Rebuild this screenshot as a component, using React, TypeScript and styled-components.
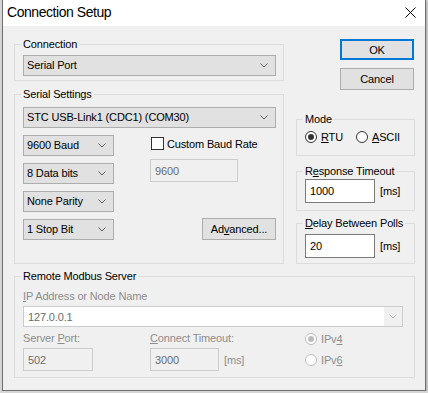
import React from "react";
import styled, { createGlobalStyle } from "styled-components";

const GlobalStyle = createGlobalStyle`
  html, body {
    margin: 0;
    padding: 0;
  }
  body {
    background: #d6d6d6;
    font-family: "Liberation Sans", Arial, sans-serif;
    font-size: 11px;
    letter-spacing: -0.15px;
    color: #000;
  }
  * {
    box-sizing: border-box;
  }
`;

const Window = styled.div`
  width: 424px;
  height: 391px;
  margin-left: 2px;
  border: 1px solid #6f6f6f;
  border-top: none;
  background: #f0f0f0;
  display: flex;
  flex-direction: column;
  box-shadow: 1px 1px 2px rgba(0, 0, 0, 0.2);
`;

const TitleBar = styled.div`
  height: 26px;
  flex: none;
  background: #fff;
  display: flex;
  align-items: center;
  justify-content: space-between;
  padding: 0 9px 2px 4px;
`;

const Title = styled.span`
  font-size: 14px;
  letter-spacing: -0.45px;
`;

const Body = styled.div`
  flex: 1;
  padding: 12px 0 0 11px;
`;

const TopRow = styled.div`
  display: flex;
  gap: 12px;
`;

const Column = styled.div<{ $w: number }>`
  width: ${(p) => p.$w}px;
  display: flex;
  flex-direction: column;
`;

const Group = styled.fieldset<{ $mt?: number; $pt?: number; $pb?: number; $w?: number }>`
  margin: ${(p) => p.$mt ?? 0}px 0 0 0;
  min-width: 0;
  width: ${(p) => (p.$w ? `${p.$w}px` : "auto")};
  border: 1px solid #dcdcdc;
  padding: ${(p) => p.$pt ?? 4}px 7px ${(p) => p.$pb ?? 4}px 8px;
`;

const Legend = styled.legend`
  padding: 0 2px;
  margin-left: -2px;
  line-height: 13px;
  white-space: nowrap;
`;

const Key = styled.span`
  text-decoration: underline;
  text-underline-offset: 1px;
`;

const Combo = styled.div<{ $w?: number; $mt?: number }>`
  display: flex;
  align-items: center;
  justify-content: space-between;
  width: ${(p) => (p.$w ? `${p.$w}px` : "100%")};
  height: 21px;
  margin-top: ${(p) => p.$mt ?? 0}px;
  padding: 0 7px 0 3px;
  background: #e1e1e1;
  border: 1px solid #adadad;
  line-height: 13px;
  white-space: nowrap;
`;

const EditCombo = styled.div`
  grid-column: 1 / -1;
  display: flex;
  width: 380px;
  height: 21px;
  margin-top: 3px;
  border: 1px solid #cccccc;
  background: #fff;
`;

const EditArea = styled.div`
  flex: 1;
  display: flex;
  align-items: center;
  padding-left: 4px;
  color: #6d6d6d;
  background: #fff;
`;

const DropArea = styled.div`
  width: 18px;
  display: flex;
  align-items: center;
  justify-content: center;
  background: #f0f0f0;
`;

const TextBox = styled.div<{ $w: number; $h?: number; $disabled?: boolean; $mt?: number }>`
  width: ${(p) => p.$w}px;
  height: ${(p) => p.$h ?? 23}px;
  margin-top: ${(p) => p.$mt ?? 0}px;
  display: flex;
  align-items: center;
  padding-left: 4px;
  border: 1px solid ${(p) => (p.$disabled ? "#cccccc" : "#7a7a7a")};
  background: ${(p) => (p.$disabled ? "#f0f0f0" : "#fff")};
  color: ${(p) => (p.$disabled ? "#6d6d6d" : "#000")};
`;

const Button = styled.div<{ $default?: boolean; $h?: number; $mt?: number }>`
  width: 74px;
  height: ${(p) => p.$h ?? 21}px;
  margin-top: ${(p) => p.$mt ?? 0}px;
  display: flex;
  align-items: center;
  justify-content: center;
  background: #e1e1e1;
  border: ${(p) => (p.$default ? "2px solid #0078d7" : "1px solid #adadad")};
`;

const ButtonStack = styled.div`
  display: flex;
  flex-direction: column;
  align-items: flex-end;
  padding-right: 1px;
`;

const SerialGrid = styled.div`
  display: grid;
  grid-template-columns: 91px 1fr;
  column-gap: 36px;
  margin-top: 7px;
`;

const Stack = styled.div<{ $gap?: number }>`
  display: flex;
  flex-direction: column;
  gap: ${(p) => p.$gap ?? 0}px;
`;

const CheckRow = styled.label`
  display: flex;
  align-items: center;
  gap: 3px;
  height: 13px;
  margin: 2px 0 0 1px;
`;

const CheckBox = styled.span`
  width: 13px;
  height: 13px;
  border: 1px solid #333;
  background: #fff;
`;

const AdvancedButton = styled(Button)`
  align-self: flex-end;
  margin-top: auto;
`;

const RadioRow = styled.div`
  display: flex;
  align-items: center;
  gap: 13px;
  height: 13px;
`;

const RadioItem = styled.label<{ $disabled?: boolean }>`
  display: flex;
  align-items: center;
  gap: 4px;
  height: 13px;
  color: ${(p) => (p.$disabled ? "#8d8d8d" : "#000")};
`;

const RadioCircle = styled.span<{ $checked?: boolean; $disabled?: boolean }>`
  width: 12px;
  height: 12px;
  border-radius: 50%;
  border: 1px solid ${(p) => (p.$disabled ? "#bcbcbc" : "#333")};
  background: #fff;
  display: flex;
  align-items: center;
  justify-content: center;
  &::after {
    content: "";
    width: 6px;
    height: 6px;
    border-radius: 50%;
    background: ${(p) => (p.$disabled ? "#bcbcbc" : "#333")};
    display: ${(p) => (p.$checked ? "block" : "none")};
  }
`;

const InputRow = styled.div`
  display: flex;
  align-items: center;
  gap: 5px;
`;

const Unit = styled.span<{ $disabled?: boolean }>`
  color: ${(p) => (p.$disabled ? "#8d8d8d" : "#000")};
`;

const RemoteGrid = styled.div`
  display: grid;
  grid-template-columns: 127px 155px 1fr;
  align-items: center;
`;

const DimLabel = styled.div<{ $mt?: number; $span?: boolean }>`
  grid-column: ${(p) => (p.$span ? "1 / -1" : "auto")};
  height: 13px;
  line-height: 13px;
  margin-top: ${(p) => p.$mt ?? 0}px;
  color: #8d8d8d;
`;

const GridCell = styled.div<{ $mt?: number }>`
  margin-top: ${(p) => p.$mt ?? 0}px;
`;

const Chevron = ({ color = "#606060" }: { color?: string }) => (
  <svg width="8" height="5" viewBox="0 0 8 5">
    <path d="M0.5 0.5 L4 4 L7.5 0.5" fill="none" stroke={color} strokeWidth="1" />
  </svg>
);

const CloseIcon = () => (
  <svg width="11" height="11" viewBox="0 0 11 11">
    <path d="M0.5 0.5 L10.5 10.5 M10.5 0.5 L0.5 10.5" stroke="#000" strokeWidth="1" />
  </svg>
);

const Select = ({ value, w, mt }: { value: string; w?: number; mt?: number }) => (
  <Combo $w={w} $mt={mt}>
    <span>{value}</span>
    <Chevron />
  </Combo>
);

const Radio = ({
  children,
  checked,
  disabled,
}: {
  children: React.ReactNode;
  checked?: boolean;
  disabled?: boolean;
}) => (
  <RadioItem $disabled={disabled}>
    <RadioCircle $checked={checked} $disabled={disabled} />
    <span>{children}</span>
  </RadioItem>
);

export default function App() {
  return (
    <>
      <GlobalStyle />
      <Window>
        <TitleBar>
          <Title>Connection Setup</Title>
          <CloseIcon />
        </TitleBar>
        <Body>
          <TopRow>
            <Column $w={270}>
              <Group $pt={4} $pb={4}>
                <Legend>Connection</Legend>
                <Select value="Serial Port" />
              </Group>
              <Group $mt={7} $pt={6} $pb={23}>
                <Legend>Serial Settings</Legend>
                <Select value="STC USB-Link1 (CDC1) (COM30)" />
                <SerialGrid>
                  <Stack $gap={7}>
                    <Select value="9600 Baud" w={91} />
                    <Select value="8 Data bits" w={91} />
                    <Select value="None Parity" w={91} />
                    <Select value="1 Stop Bit" w={91} />
                  </Stack>
                  <Stack>
                    <CheckRow>
                      <CheckBox />
                      <span>Custom Baud Rate</span>
                    </CheckRow>
                    <TextBox $w={88} $disabled $mt={9}>
                      9600
                    </TextBox>
                    <AdvancedButton $h={22}>
                      Ad<Key>v</Key>anced...
                    </AdvancedButton>
                  </Stack>
                </SerialGrid>
              </Group>
            </Column>
            <Column $w={119}>
              <ButtonStack>
                <Button $default $mt={1}>
                  OK
                </Button>
                <Button $h={22} $mt={8}>
                  Cancel
                </Button>
              </ButtonStack>
              <Group $mt={23} $pt={4} $pb={12}>
                <Legend>Mode</Legend>
                <RadioRow>
                  <Radio checked>
                    <Key>R</Key>TU
                  </Radio>
                  <Radio>
                    <Key>A</Key>SCII
                  </Radio>
                </RadioRow>
              </Group>
              <Group $mt={9} $pt={1} $pb={7}>
                <Legend>
                  R<Key>e</Key>sponse Timeout
                </Legend>
                <InputRow>
                  <TextBox $w={70} $h={24}>
                    1000
                  </TextBox>
                  <Unit>[ms]</Unit>
                </InputRow>
              </Group>
              <Group $mt={6} $pt={4} $pb={5}>
                <Legend>
                  <Key>D</Key>elay Between Polls
                </Legend>
                <InputRow>
                  <TextBox $w={70} $h={24}>
                    20
                  </TextBox>
                  <Unit>[ms]</Unit>
                </InputRow>
              </Group>
            </Column>
          </TopRow>
          <Group $mt={6} $pt={7} $pb={6} $w={401}>
            <Legend>Remote Modbus Server</Legend>
            <RemoteGrid>
              <DimLabel $span>
                <Key>I</Key>P Address or Node Name
              </DimLabel>
              <EditCombo>
                <EditArea>127.0.0.1</EditArea>
                <DropArea>
                  <Chevron color="#b5b5b5" />
                </DropArea>
              </EditCombo>
              <DimLabel $mt={5}>
                Server <Key>P</Key>ort:
              </DimLabel>
              <DimLabel $mt={5}>
                <Key>C</Key>onnect Timeout:
              </DimLabel>
              <GridCell $mt={5}>
                <Radio checked disabled>
                  IPv<Key>4</Key>
                </Radio>
              </GridCell>
              <GridCell $mt={3}>
                <TextBox $w={70} $disabled>
                  502
                </TextBox>
              </GridCell>
              <GridCell $mt={3}>
                <InputRow>
                  <TextBox $w={69} $disabled>
                    3000
                  </TextBox>
                  <Unit $disabled>[ms]</Unit>
                </InputRow>
              </GridCell>
              <GridCell $mt={3}>
                <Radio disabled>
                  IPv<Key>6</Key>
                </Radio>
              </GridCell>
            </RemoteGrid>
          </Group>
        </Body>
      </Window>
    </>
  );
}
